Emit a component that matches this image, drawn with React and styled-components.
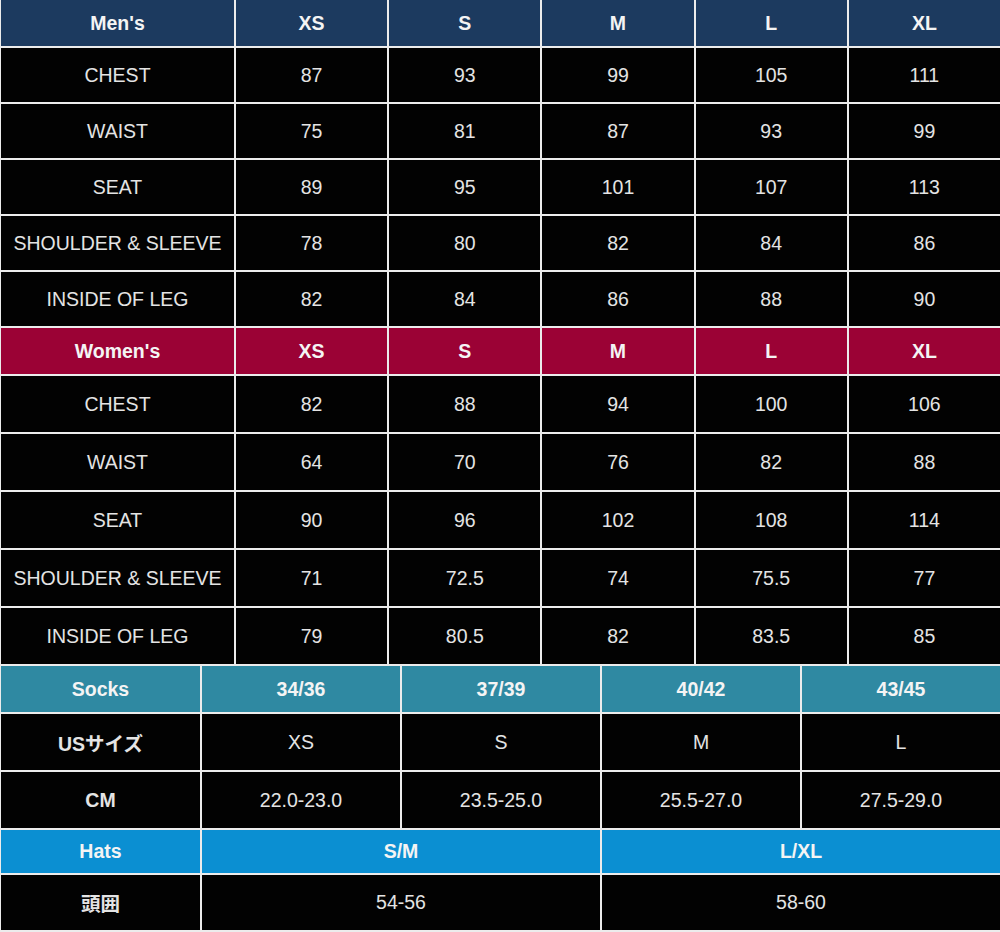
import React from "react";
import styled, { createGlobalStyle } from "styled-components";

const GlobalStyle = createGlobalStyle`
  body {
    margin: 0;
    background: #ffffff;
  }
`;

const Chart = styled.div`
  width: 1000px;
  box-sizing: border-box;
  display: flex;
  flex-direction: column;
  gap: 2px;
  padding: 0 0 2px 1px;
  background: #ececec;
  font-family: "Liberation Sans", Arial, "Noto Sans CJK JP", sans-serif;
`;

const Section = styled.div`
  display: grid;
  grid-template-columns: ${(p) => p.$cols};
  grid-template-rows: ${(p) => p.$head}px;
  grid-auto-rows: ${(p) => p.$row}px;
  gap: 2px;
`;

const HeadCell = styled.div`
  display: flex;
  align-items: center;
  justify-content: center;
  grid-column: span ${(p) => p.$span || 1};
  background: ${(p) => p.$bg};
  color: #f4f4f4;
  font-size: 19.5px;
  font-weight: 700;
`;

const Cell = styled.div`
  display: flex;
  align-items: center;
  justify-content: center;
  grid-column: span ${(p) => p.$span || 1};
  background: #020202;
  color: #e4e4e4;
  font-size: 19.5px;
  font-weight: ${(p) => (p.$bold ? 700 : 400)};
`;

const sizeCols = "233px repeat(5, 1fr)";

const men = [
  ["CHEST", "87", "93", "99", "105", "111"],
  ["WAIST", "75", "81", "87", "93", "99"],
  ["SEAT", "89", "95", "101", "107", "113"],
  ["SHOULDER & SLEEVE", "78", "80", "82", "84", "86"],
  ["INSIDE OF LEG", "82", "84", "86", "88", "90"],
];

const women = [
  ["CHEST", "82", "88", "94", "100", "106"],
  ["WAIST", "64", "70", "76", "82", "88"],
  ["SEAT", "90", "96", "102", "108", "114"],
  ["SHOULDER & SLEEVE", "71", "72.5", "74", "75.5", "77"],
  ["INSIDE OF LEG", "79", "80.5", "82", "83.5", "85"],
];

const socks = [
  ["USサイズ", "XS", "S", "M", "L"],
  ["CM", "22.0-23.0", "23.5-25.0", "25.5-27.0", "27.5-29.0"],
];

// boldLabel: the first column of the socks / hats tables is set bold
const SizeTable = ({ title, color, heads, rows, cols, head, row, boldLabel }) => (
  <Section $cols={cols} $head={head} $row={row}>
    <HeadCell $bg={color}>{title}</HeadCell>
    {heads.map((h) => (
      <HeadCell key={h.label} $bg={color} $span={h.span}>
        {h.label}
      </HeadCell>
    ))}
    {rows.map((r, i) =>
      r.map((v, j) => (
        <Cell
          key={i + "-" + j}
          $span={j > 0 && r.length === 3 ? 2 : 1}
          $bold={boldLabel && j === 0}
        >
          {v}
        </Cell>
      ))
    )}
  </Section>
);

const letters = ["XS", "S", "M", "L", "XL"].map((label) => ({ label }));

export default function App() {
  return (
    <>
      <GlobalStyle />
      <Chart>
        <SizeTable
          title="Men's"
          color="#1c3a5f"
          heads={letters}
          rows={men}
          cols={sizeCols}
          head={46}
          row={54}
        />
        <SizeTable
          title="Women's"
          color="#9b0235"
          heads={letters}
          rows={women}
          cols={sizeCols}
          head={46}
          row={56}
        />
        <SizeTable
          title="Socks"
          color="#2f89a2"
          heads={["34/36", "37/39", "40/42", "43/45"].map((label) => ({ label }))}
          rows={socks}
          cols="199px repeat(4, 1fr)"
          head={46}
          row={56}
          boldLabel
        />
        <SizeTable
          title="Hats"
          color="#0b8fd2"
          heads={[
            { label: "S/M", span: 2 },
            { label: "L/XL", span: 2 },
          ]}
          rows={[["頭囲", "54-56", "58-60"]]}
          cols="199px repeat(4, 1fr)"
          head={43}
          row={55}
          boldLabel
        />
      </Chart>
    </>
  );
}
